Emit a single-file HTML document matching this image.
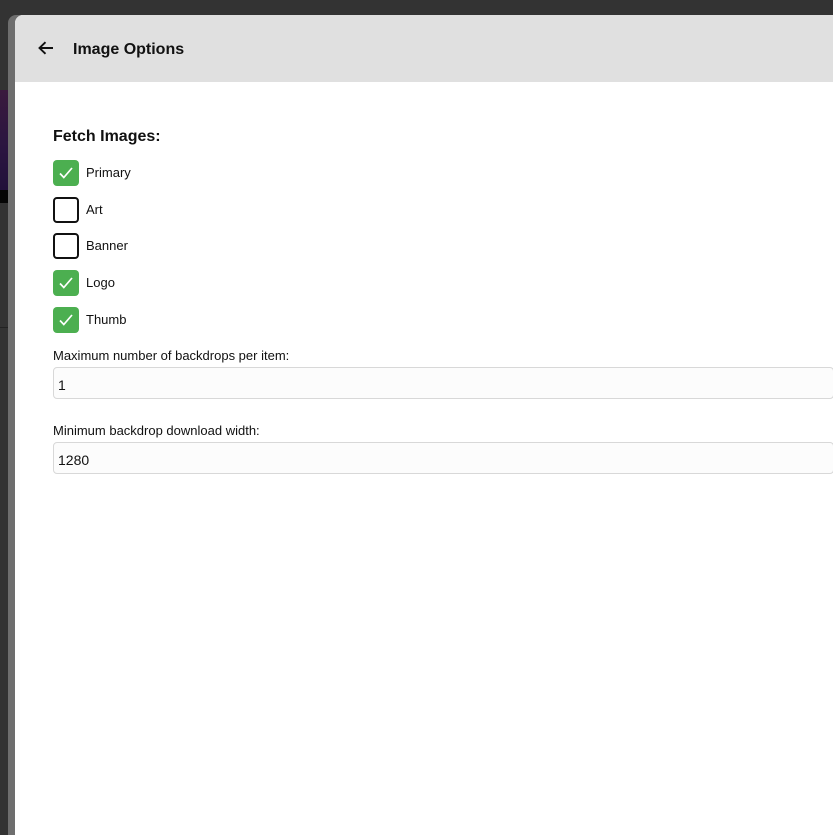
<!DOCTYPE html>
<html><head><meta charset="utf-8"><style>
*{box-sizing:border-box;margin:0;padding:0}
html,body{width:833px;height:835px;overflow:hidden;background:#333;font-family:"Liberation Sans",sans-serif;color:#111}
.strip{position:absolute;left:8px;top:15px;width:20px;height:820px;background:#6e6e6e;border-top-left-radius:8px}
.purple{position:absolute;left:0;top:90px;width:8px;height:100px;background:linear-gradient(#3a1a3e,#2a1540 60%,#22103a)}
.blk{position:absolute;left:0;top:190px;width:8px;height:13px;background:#050505}
.ln{position:absolute;left:0;top:327px;width:8px;height:1px;background:#222}
.dlg{position:absolute;left:15px;top:15px;width:818px;height:820px;background:#fff;border-top-left-radius:8px;overflow:hidden}
.hdr{height:67px;background:#e0e0e0;position:relative}
.hdr svg{position:absolute;left:22px;top:24px}
.hdr .t{position:absolute;left:58px;top:26px;font-size:16px;font-weight:bold;color:#111}
.h2{position:absolute;left:38px;top:113px;font-size:16px;font-weight:bold}
.cb{position:absolute;left:38px;width:26px;height:26px;border-radius:4px}
.on{background:#4caf50}
.off{border:2px solid #111;background:#fff}
.cb svg{position:absolute;left:4px;top:4px}
.lb{position:absolute;left:71px;font-size:13px}
.fl{position:absolute;left:38px;font-size:13px}
.in{position:absolute;left:38px;width:781px;height:32px;border:1px solid #d8d8d8;border-radius:4px;background:#fcfcfc;font-size:14px;padding:9px 0 0 4px}
</style></head><body>
<div class="purple"></div><div class="blk"></div><div class="ln"></div>
<div class="strip"></div>
<div class="dlg">
<div class="hdr"><svg width="18" height="18" viewBox="0 0 18 18"><path d="M16 9H3M8.5 3.2L2.5 9l6 5.8" fill="none" stroke="#111" stroke-width="1.9"/></svg><div class="t">Image Options</div></div>
<div class="h2">Fetch Images:</div>
<div class="cb on" style="top:145px"><svg width="18" height="18" viewBox="0 0 18 18"><path d="M3 9.5l3.8 4L15 4" fill="none" stroke="#fff" stroke-width="1.7"/></svg></div><div class="lb" style="top:150px">Primary</div>
<div class="cb off" style="top:182px"></div><div class="lb" style="top:187px">Art</div>
<div class="cb off" style="top:218px"></div><div class="lb" style="top:223px">Banner</div>
<div class="cb on" style="top:255px"><svg width="18" height="18" viewBox="0 0 18 18"><path d="M3 9.5l3.8 4L15 4" fill="none" stroke="#fff" stroke-width="1.7"/></svg></div><div class="lb" style="top:260px">Logo</div>
<div class="cb on" style="top:292px"><svg width="18" height="18" viewBox="0 0 18 18"><path d="M3 9.5l3.8 4L15 4" fill="none" stroke="#fff" stroke-width="1.7"/></svg></div><div class="lb" style="top:297px">Thumb</div>
<div class="fl" style="top:333px">Maximum number of backdrops per item:</div>
<div class="in" style="top:352px">1</div>
<div class="fl" style="top:408px">Minimum backdrop download width:</div>
<div class="in" style="top:427px">1280</div>
</div>
</body></html>
